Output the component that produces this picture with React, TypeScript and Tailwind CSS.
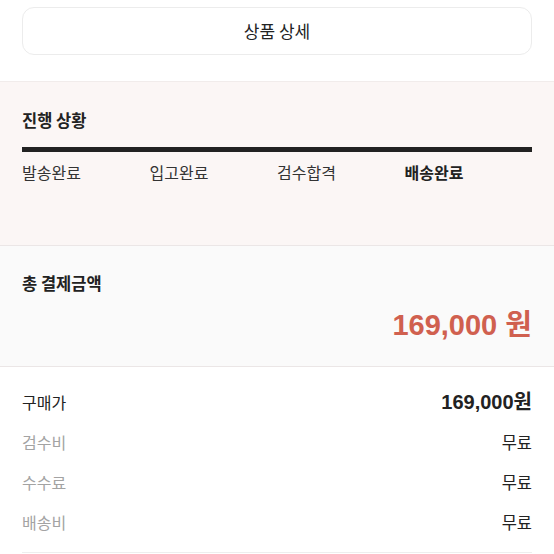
import React from "react";

const font = { fontFamily: '"Noto Sans CJK KR", "Noto Sans", sans-serif' };
const latin = { fontFamily: '"Liberation Sans", "Noto Sans CJK KR", sans-serif' };

export default function App() {
  const steps = ["발송완료", "입고완료", "검수합격", "배송완료"];
  const rows = [
    { k: "구매가", v: "169,000원", main: true },
    { k: "검수비", v: "무료" },
    { k: "수수료", v: "무료" },
    { k: "배송비", v: "무료" },
  ];
  return (
    <div className="w-[554px] h-[554px] overflow-hidden bg-white text-[#222]" style={font}>
      <div className="px-[22px] pt-[7px] pb-[26px]">
        <div className="h-[48px] rounded-[12px] border border-[#ececec] flex items-center justify-center text-[17px] text-[#222]">
          상품 상세
        </div>
      </div>
      <div className="bg-[#fbf6f5] border-t border-[#f1eceb] h-[164px] px-[22px] pt-[26px]">
        <div className="text-[16.5px] font-bold leading-[24px]">진행 상황</div>
        <div className="mt-[15px] h-[5px] bg-[#222]" />
        <div className="grid grid-cols-4 mt-[8px] text-[16px] leading-[24px]">
          {steps.map((s, i) => (
            <div key={s} className={i === 3 ? "font-bold text-[#222]" : "text-[#333]"}>
              {s}
            </div>
          ))}
        </div>
      </div>
      <div className="bg-[#fafafa] border-t border-b border-[#ebe6e6] h-[122px] px-[22px] pt-[25px]">
        <div className="text-[16.5px] font-bold leading-[24px]">총 결제금액</div>
        <div className="mt-[12px] text-right text-[29px] font-bold leading-[36px] text-[#d0604f]" style={latin}>
          169,000 원
        </div>
      </div>
      <div className="px-[22px] pt-[15px]">
        {rows.map((r) => (
          <div key={r.k} className="flex justify-between items-center h-[40px] text-[16px]">
            <span className={r.main ? "text-[#222]" : "text-[#a3a3a3]"}>{r.k}</span>
            <span
              className={r.main ? "font-bold text-[#222] text-[20px]" : "text-[#222] text-[16.5px]"}
              style={r.main ? latin : undefined}
            >
              {r.v}
            </span>
          </div>
        ))}
        <div className="mt-[10px] border-t border-[#eeeeee]" />
      </div>
    </div>
  );
}
